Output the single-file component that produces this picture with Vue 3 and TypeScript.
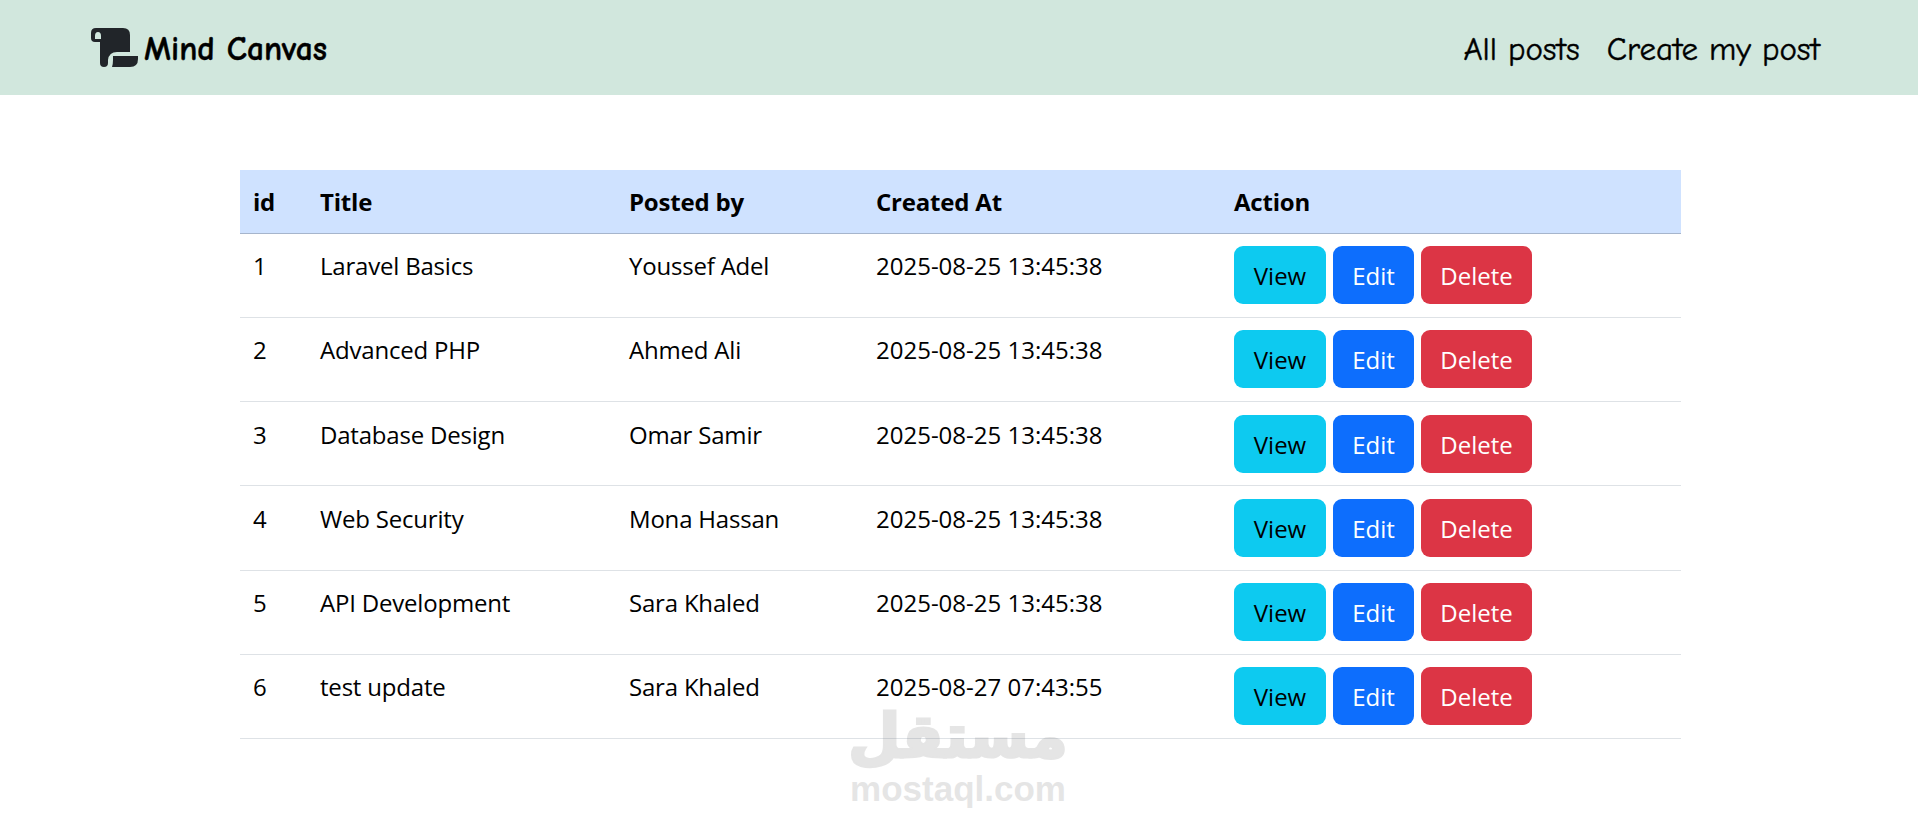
<script setup lang="ts">
interface Post { id: number; title: string; by: string; at: string }
const posts: Post[] = [
  { id: 1, title: 'Laravel Basics', by: 'Youssef Adel', at: '2025-08-25 13:45:38' },
  { id: 2, title: 'Advanced PHP', by: 'Ahmed Ali', at: '2025-08-25 13:45:38' },
  { id: 3, title: 'Database Design', by: 'Omar Samir', at: '2025-08-25 13:45:38' },
  { id: 4, title: 'Web Security', by: 'Mona Hassan', at: '2025-08-25 13:45:38' },
  { id: 5, title: 'API Development', by: 'Sara Khaled', at: '2025-08-25 13:45:38' },
  { id: 6, title: 'test update', by: 'Sara Khaled', at: '2025-08-27 07:43:55' },
]
</script>

<template>
  <div class="page">
    <nav class="navbar">
      <a class="brand">
        <svg class="logo" viewBox="0 0 47 39" width="47" height="39">
          <path fill="#212529" fill-rule="evenodd" d="M5 0H32Q39 0 39 7V24H26Q18 24 17 32V35Q17 39 13 39Q9 39 9 35V14H4Q0 14 0 10V5Q0 0 5 0ZM7 4Q4 4 4 8V11H10V8Q10 4 7 4Z"/>
          <path fill="#212529" d="M22 28H47V31Q47 39 39 39H21Q22 36 22 32Z"/>
        </svg>
        <span>Mind Canvas</span>
      </a>
      <div class="links">
        <a>All posts</a>
        <a>Create my post</a>
      </div>
    </nav>

    <main class="content">
      <table class="posts">
        <colgroup>
          <col class="c1" /><col class="c2" /><col class="c3" /><col class="c4" /><col />
        </colgroup>
        <thead>
          <tr>
            <th>id</th><th>Title</th><th>Posted by</th><th>Created At</th><th>Action</th>
          </tr>
        </thead>
        <tbody>
          <tr v-for="p in posts" :key="p.id">
            <td>{{ p.id }}</td>
            <td class="name">{{ p.title }}</td>
            <td class="name">{{ p.by }}</td>
            <td>{{ p.at }}</td>
            <td class="actions">
              <div class="btns">
                <a class="btn info">View</a>
                <a class="btn primary">Edit</a>
                <a class="btn danger">Delete</a>
              </div>
            </td>
          </tr>
        </tbody>
      </table>
    </main>

    <div class="mark">
      <span class="ar" dir="rtl" lang="ar">مستقل</span>
      <span class="en">mostaql.com</span>
    </div>
  </div>
</template>

<style>
html, body { margin: 0; background: #fff; }
</style>

<style scoped>
.page {
  position: relative;
  width: 1918px;
  height: 820px;
  overflow: hidden;
  background: #fff;
  font-family: "Open Sans", "Noto Sans", sans-serif;
  color: #000;
}
.navbar {
  height: 95px;
  box-sizing: border-box;
  background: #d1e7dd;
  padding: 2px 98px 0 91px;
  display: flex;
  align-items: center;
  justify-content: space-between;
  font-family: "Comic Sans MS", "Comic Neue", cursive;
}
.brand {
  display: flex;
  align-items: center;
  font-size: 33.500px;
  font-weight: 700;
  -webkit-text-stroke: 0.4px #000;
}
.logo { display: block; margin-right: 6px; margin-top: -3px; }
.links {
  display: flex;
  gap: 27px;
  font-size: 33px;
  -webkit-text-stroke: 0.4px #000;
}
.content { padding: 75px 237px 0 240px; }
.posts {
  width: 100%;
  border-collapse: collapse;
  table-layout: fixed;
  font-size: 24px;
  line-height: 36px;
}
.c1 { width: 67px; }
.c2 { width: 309px; }
.c3 { width: 247px; }
.c4 { width: 358px; }
th {
  text-align: left;
  background: #cfe2ff;
  padding: 14px 13px 13px;
  font-weight: 700;
  letter-spacing: -0.2px;
  border-bottom: 1.500px solid #a6b5cc;
}
td {
  padding: 14px 13px 0;
  vertical-align: top;
  border-bottom: 1.500px solid #dee2e6;
}
td.name { letter-spacing: -0.2px; }
td.actions { padding: 12px 13px 13px; }
tbody tr:nth-child(3) td { padding-top: 15px; }
tbody tr:nth-child(3) td.actions { padding: 13px 13px 12px; }
tbody tr:nth-child(4) td { padding-top: 15px; }
tbody tr:nth-child(4) td.actions { padding: 13px 13px 13px; }
.btns { display: flex; gap: 7px; }
.btn {
  height: 58px;
  box-sizing: border-box;
  padding-top: 2px;
  border-radius: 9px;
  display: flex;
  align-items: center;
  justify-content: center;
}
.info { width: 92px; background: #0dcaf0; color: #000; }
.primary { width: 81px; background: #0d6efd; color: #fff; }
.danger { width: 111px; background: #dc3545; color: #fff; }
.mark {
  position: absolute;
  left: 850px;
  top: 700px;
  width: 216px;
  display: flex;
  flex-direction: column;
  align-items: center;
  color: #7f7f7f;
  opacity: 0.2;
  pointer-events: none;
}
.ar {
  font-family: "DejaVu Sans", sans-serif;
  font-weight: 700;
  font-size: 60px;
  line-height: 72px;
  -webkit-text-stroke: 3px #7f7f7f;
  paint-order: stroke fill;
}
.en {
  font-family: "Liberation Sans", sans-serif;
  font-weight: 700;
  font-size: 35px;
  line-height: 34px;
}
</style>
